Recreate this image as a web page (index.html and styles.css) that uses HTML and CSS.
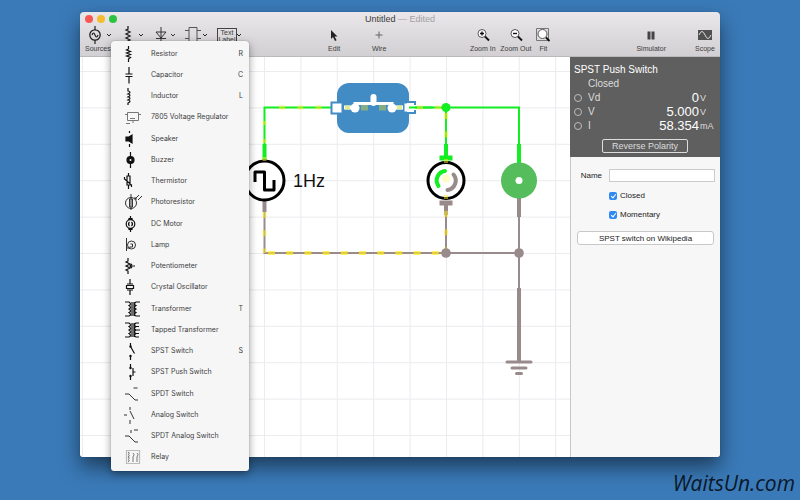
FILE: index.html
```
<!DOCTYPE html>
<html lang="en">
	<head>
		<meta charset="utf-8" />
		<title>Untitled</title>

		<meta name="viewport" content="width=device-width, initial-scale=1" />

		<link rel="stylesheet" href="styles.css">
	</head>
	<body>
		<main class="window">
			<header class="titlebar">
				<div class="lights"><i class="close"></i><i class="minimise"></i><i class="expand"></i></div>
				<h1>Untitled <span>— Edited</span></h1>
			</header>

			<nav class="toolbar">
				<div class="parts">
					<button class="tool part">
						<svg width="30" height="18" viewBox="0 0 30 18"><g fill="none" stroke="#222"><circle cx="11" cy="9" r="5.2" stroke-width="1.3" /><path d="M11 0v4M11 14v4M8 9q1.500-4 3 0t3 0" stroke-width="1.200" /><path d="M23 8l2 2 2-2" /></g></svg>
						Sources
					</button>
					<button class="tool part" aria-label="Passives">
						<svg width="30" height="18" viewBox="0 0 30 18"><g fill="none" stroke="#222"><path d="M11 0v3l-2 1 4 2-4 2 4 2-4 2 4 2-2 1v3" stroke-width="1.300" /><path d="M22 8l2 2 2-2" /></g></svg>
					</button>
					<button class="tool part" aria-label="Semiconductors">
						<svg width="30" height="18" viewBox="0 0 30 18"><g fill="none" stroke="#333"><path d="M11 1v16M6 6h10l-5 6zM6 12.500h10" /><path d="M21 8l2 2 2-2" /></g></svg>
					</button>
					<button class="tool part" aria-label="Chips">
						<svg width="30" height="18" viewBox="0 0 30 18"><g fill="none" stroke="#555"><path d="M6 1.500h8v15H6zM2 4.500h4M2 12.500h4M14 4.500h4M14 12.500h4" /><path d="M20 8l2 2 2-2" stroke="#222" /></g></svg>
					</button>
					<button class="tool part" aria-label="Labels">
						<span class="text-label">Text<br>Label</span>
						<svg width="6" height="18" viewBox="0 0 6 18"><path d="M1 8l2 2 2-2" fill="none" stroke="#222" /></svg>
					</button>
				</div>

				<div class="tools modes">
					<button class="tool">
						<svg width="16" height="18" viewBox="0 0 16 18"><path d="M5 4v9l2-2 2 4 1.600-.8-2-3.700h2.900z" fill="#222" /></svg>
						Edit
					</button>
					<button class="tool">
						<svg width="16" height="18" viewBox="0 0 16 18"><path d="M8 5.500v7M4.500 9h7" stroke="#666" /></svg>
						Wire
					</button>
				</div>

				<div class="tools zooms">
					<button class="tool">
						<svg width="16" height="18" viewBox="0 0 16 18"><circle cx="7" cy="7.500" r="4" fill="#fff" stroke="#555" /><path d="M5 7.500h4M7 5.500v4" stroke="#111" stroke-width="1.400" /><path d="M10 10.500l4 4" stroke="#111" stroke-width="1.800" /></svg>
						Zoom In
					</button>
					<button class="tool">
						<svg width="16" height="18" viewBox="0 0 16 18"><circle cx="7" cy="7.500" r="4" fill="#fff" stroke="#555" /><path d="M5 7.500h4" stroke="#111" stroke-width="1.400" /><path d="M10 10.500l4 4" stroke="#111" stroke-width="1.800" /></svg>
						Zoom Out
					</button>
					<button class="tool fit">
						<svg width="16" height="18" viewBox="0 0 16 18"><path d="M1.500 2.500h12v12h-12z" fill="#ddd" stroke="#777" /><circle cx="7.500" cy="8" r="4.500" fill="#fff" stroke="#555" /><path d="M11 11.500l3.500 3.500" stroke="#111" stroke-width="1.800" /></svg>
						Fit
					</button>
				</div>

				<div class="tools">
					<button class="tool">
						<svg width="16" height="18" viewBox="0 0 16 18"><path d="M4.500 5.500h3v8h-3zM8.500 5.500h3v8h-3z" fill="#444" /></svg>
						Simulator
					</button>
					<button class="tool">
						<svg width="16" height="18" viewBox="0 0 16 18"><path d="M1 4h14v10H1z" fill="#505050" /><path d="M2 9q3-7 6 0t6 0" fill="none" stroke="#ddd" /></svg>
						Scope
					</button>
				</div>
			</nav>

			<div class="document">
				<section class="canvas">
					<svg width="100%" height="400">
						<defs>
							<pattern id="grid" x="2" y="14" width="36.400" height="36.400" patternUnits="userSpaceOnUse">
								<path d="M.5 0v36.400M0 .5h36.400" fill="none" stroke="#ebebf0" />
							</pattern>
						</defs>
						<rect width="100%" height="100%" fill="url(#grid)" />
						<g transform="translate(-80 -57)" fill="none">
							<!-- live wires -->
							<g stroke="#12ee22" stroke-width="2">
								<path d="M264.500 160v-52.500H332M410 107.500h109V160M446 107.500V160" />
								<path d="M264.500 144v17M446 144v13M519 144v20" stroke-width="4" />
								<path d="M439.500 158h13" stroke-width="5" />
							</g>

							<!-- ground wires -->
							<g stroke="#998b8b" stroke-width="2">
								<path d="M264.500 200v53H519M446 205v48M519 195v95" />
								<path d="M264.500 200v12M446 204v11M519 196v21M519 288v74" stroke-width="4" />
								<path d="M439.500 203h13" stroke-width="5" />
								<path d="M507 362h24M512 368h14M516.500 373.500h5" stroke-width="3" stroke-linecap="round" />
							</g>

							<!-- push switch -->
							<rect x="337" y="83" width="72" height="50" rx="12" fill="#428cc6" />
							<path d="M331.500 102.500h11v11h-11z" fill="#fff" stroke="#428cc6" stroke-width="2" />
							<path d="M415 105v-3h-9v11h9v-3" fill="#fff" stroke="#428cc6" stroke-width="2" />
							<path d="M414 104.500h-8.500v6h8.500" fill="#fff" stroke="#fff" stroke-width="2" />
							<path d="M409 107.500h24" stroke="#12ee22" stroke-width="2" />
							<path d="M344 107.500h14M390 107.500h13" stroke="#fff" stroke-width="4" />
							<path d="M345 107.500h5M397 107.500h5" stroke="#e4ec92" stroke-width="4" />
							<path d="M361 107.500h7M379 107.500h7" stroke="#82ad86" stroke-width="6" />
							<path d="M355 106v-2.500h37v2.500" stroke="#fff" stroke-width="3" />
							<path d="M373.500 103v-6" stroke="#fff" stroke-width="6" stroke-linecap="round" />
							<circle cx="355" cy="108" r="4.500" fill="#fff" />
							<circle cx="392" cy="108" r="4.500" fill="#fff" />

							<!-- square wave source -->
							<circle cx="264.500" cy="180.500" r="19.500" fill="#fff" stroke="#000" stroke-width="3" />
							<path d="M255 182v-10h9.500v18h9.500v-10" stroke="#000" stroke-width="3" stroke-linejoin="round" />
							<text x="293" y="187" class="frequency">1Hz</text>

							<!-- motor -->
							<circle cx="446" cy="180.500" r="18" fill="#fff" stroke="#000" stroke-width="3" />
							<path d="M445 171a9.500 9.500 0 0 0-6.500 15" stroke="#12ee22" stroke-width="4" stroke-linecap="round" />
							<path d="M453.500 174.500a9.500 9.500 0 0 1-6 15.500" stroke="#998b8b" stroke-width="4" stroke-linecap="round" />

							<!-- buzzer -->
							<circle cx="519" cy="180.500" r="18" fill="#55bd5b" />
							<circle cx="519" cy="180.500" r="3.500" fill="#fff" />

							<!-- current flow -->
							<g stroke="#ffec20" stroke-opacity=".5" stroke-width="4">
								<path d="M264.500 161v-53.500" stroke-dasharray="4 14" />
								<path d="M279 107.500h52" stroke-dasharray="6 12.200" />
								<path d="M264.500 212v41" stroke-dasharray="6 12.200" />
								<path d="M268 253h178" stroke-dasharray="7 11.200" stroke-opacity=".7" />
								<path d="M417 107.500h26" stroke-dasharray="6 12.200" />
								<path d="M446 113v30M446 211v39" stroke-dasharray="6 12.200" />
								<path d="M446 159v4M446 195v4" />
							</g>
							<circle cx="446" cy="178.500" r="4" fill="#fffbc4" />

							<circle cx="446" cy="107.500" r="4.500" fill="#12ee22" />
							<circle cx="446" cy="253" r="4.800" fill="#998b8b" />
							<circle cx="519" cy="253" r="4.800" fill="#998b8b" />
						</g>
					</svg>
				</section>

				<aside class="inspector">
					<section class="readings">
						<h2>SPST Push Switch</h2>
						<p>Closed</p>
						<label class="reading"><input type="radio" name="trace">Vd <output><b>0</b>V</output></label>
						<label class="reading"><input type="radio" name="trace">V <output><b>5.000</b>V</output></label>
						<label class="reading"><input type="radio" name="trace">I <output><b>58.354</b>mA</output></label>
						<button class="reverse">Reverse Polarity</button>
					</section>
					<form class="properties">
						<label for="name">Name</label>
						<input type="text" id="name">
						<label class="check"><input type="checkbox" checked>Closed</label>
						<label class="check"><input type="checkbox" checked>Momentary</label>
						<button type="button" class="wikipedia">SPST switch on Wikipedia</button>
					</form>
				</aside>
			</div>

			<ul class="menu">
				<li><button><svg width="40" height="20" viewBox="0 -10 40 20"><path d="M17.500-8v3l-2 1 4 1.500-4 1.500 4 1.500-4 1.500 4 1.500-2 1.500v3" /></svg>Resistor <kbd>R</kbd></button></li>
				<li><button><svg width="40" height="20" viewBox="0 -10 40 20"><path d="M18-8v7M18 1.500v7M14.500-1h7M14.500 1.500h7" /></svg>Capacitor <kbd>C</kbd></button></li>
				<li><button><svg width="40" height="20" viewBox="0 -10 40 20"><path d="M17-8v3q4 1 0 3q4 1 0 3q4 1 0 3q4 1 0 3v2M17-2h-1M17 1h-1M17 4h-1" /></svg>Inductor <kbd>L</kbd></button></li>
				<li><button><svg width="40" height="20" viewBox="0 -10 40 20"><path class="soft" d="M16.500-4.500h11v8h-11zM14-2.500h2.500M27.500-2.500h2.500M22 3.500v2.500M19 1.500h5M15 6.500h4" /></svg>7805 Voltage Regulator</button></li>
				<li><button><svg width="40" height="20" viewBox="0 -10 40 20"><path d="M18.500-8v2M18.500 5v3" /><path class="solid" d="M15-2h3l3-2v8l-3-2h-3z" /></svg>Speaker</button></li>
				<li><button><svg width="40" height="20" viewBox="0 -10 40 20"><path d="M19.500-8v16" /><circle class="solid" cx="19.500" r="3.500" /><circle cx="19.500" r="1" fill="#fff" stroke="none" /></svg>Buzzer</button></li>
				<li><button><svg width="40" height="20" viewBox="0 -10 40 20"><path d="M17.500-8v3h-1.500v9h3v-9h-1.500M17.500 4v4M13.500-4v2l7 6v2" /></svg>Thermistor</button></li>
				<li><button><svg width="40" height="20" viewBox="0 -10 40 20"><g class="thin"><circle cx="20" cy="1" r="5.500" /><path d="M20-8v16M18.500-3h3v8h-3zM24-3l4-4M27-2l4-4M24-5v2h2" /></g></svg>Photoresistor</button></li>
				<li><button><svg width="40" height="20" viewBox="0 -10 40 20"><circle cx="19.500" r="4.300" /><path d="M19.500-8v3M19.500 5v3M18.500-2q-2 2 0 4M20.500-2q2 2 0 4" /><path class="solid" d="M18-4.500h3v-1h-3zM18 5.500h3v-1h-3z" /></svg>DC Motor</button></li>
				<li><button><svg width="40" height="20" viewBox="0 -10 40 20"><g class="thin"><path d="M15.500-7v13M15.500 3h4M19.500-1h2v3h-3" /><circle cx="20.500" r="4" /></g></svg>Lamp</button></li>
				<li><button><svg width="40" height="20" viewBox="0 -10 40 20"><path d="M17-8v3l-2 1 4 2-4 2 4 2-4 2 2 1v3M19 0h5M21-2l-2 2 2 2" /></svg>Potentiometer</button></li>
				<li><button><svg width="40" height="20" viewBox="0 -10 40 20"><path d="M19-8v5M19 3v5M16-3h6M16 3h6M15.500-1.500h7v3h-7z" /></svg>Crystal Oscillator</button></li>
				<li><button><svg width="40" height="20" viewBox="0 -10 40 20"><path d="M14-7h4q3 2 0 3.500q3 2 0 3.500q3 2 0 3.500q3 2 0 3.500h-4M29-7h-4q-3 2 0 3.500q-3 2 0 3.500q-3 2 0 3.500q-3 2 0 3.500h4M21-7v14M23-7v14" /></svg>Transformer <kbd>T</kbd></button></li>
				<li><button><svg width="40" height="20" viewBox="0 -10 40 20"><path d="M14-7h4q3 2 0 3.500q3 2 0 3.500q3 2 0 3.500q3 2 0 3.500h-4M28-7h-3q-3 2 0 3.500q-3 2 0 3.500q-3 2 0 3.500q-3 2 0 3.500h3M21-7v14M23-7v14M25-3.500h3M25 0h4M25 3.500h3" /></svg>Tapped Transformer</button></li>
				<li><button><svg width="40" height="20" viewBox="0 -10 40 20"><path d="M19.500-8v3M19.500-4.500l4 7M19.500 5v4" /><circle class="solid" cx="19.500" cy="-4.500" r=".6" /><circle class="solid" cx="19.500" cy="5" r=".6" /></svg>SPST Switch <kbd>S</kbd></button></li>
				<li><button><svg width="40" height="20" viewBox="0 -10 40 20"><path d="M19.500-8v4M19.500 4v4M22-4v8M22 0h2.500" /><circle class="solid" cx="19.500" cy="-4" r=".6" /><circle class="solid" cx="19.500" cy="4" r=".6" /></svg>SPST Push Switch</button></li>
				<li><button><svg width="40" height="20" viewBox="0 -10 40 20"><path class="thin" d="M14 0h4l6 6h3M22.500-6h4" /></svg>SPDT Switch</button></li>
				<li><button><svg width="40" height="20" viewBox="0 -10 40 20"><path d="M13 0h3M19-8v3M19-4l4 8M19 5v4" class="thin" /></svg>Analog Switch</button></li>
				<li><button><svg width="40" height="20" viewBox="0 -10 40 20"><path class="thin" d="M14 0h4l6 6h3M23-6h4M20-6v3" /></svg>SPDT Analog Switch</button></li>
				<li><button><svg width="40" height="20" viewBox="0 -10 40 20"><path class="frame" d="M15.500-6.500h13v13h-13z" /><path class="soft" d="M17-5q3 1 0 2.500q3 1 0 2.500q3 1 0 2.500q3 1 0 2.500M22-4q2 1 0 4v5M26-4q2 1 0 4v5" /></svg>Relay</button></li>
			</ul>
		</main>

		<p class="watermark">WaitsUn.com</p>
	</body>
</html>
```

FILE: styles.css
```
* { box-sizing: border-box; }

body {
	margin: 0;
	min-height: 100vh;
	padding: 12px 10% 43px;
	display: flex;
	position: relative;
	background: #3a7ab8;
	color: #3c3c3e;
	font: 7px/10px "Liberation Sans", Arial, sans-serif;
}

button,
input {
	margin: 0;
	padding: 0;
	border: 0;
	background: none;
	color: inherit;
	font: inherit;
}

svg { flex: none; }

h1, h2, p { margin: 0; font-weight: normal; }

.window {
	flex: 1;
	display: flex;
	flex-direction: column;
	position: relative;
	border-radius: 4px;
	background: linear-gradient(#e9e7e9, #d1cfd1 45px);
	box-shadow: 0 10px 20px rgba(0, 0, 0, 0.5), 0 0 1px rgba(0, 0, 0, 0.4);
}

.titlebar {
	display: grid;
	grid-template-columns: 50px 1fr 50px;
	align-items: center;
	height: 14px;
}

.titlebar h1 {
	font-size: 9px;
	text-align: center;
}

.titlebar h1 span { color: #a3a1a4; }

.lights {
	display: flex;
	gap: 4px;
	padding-left: 5px;
}

.lights i {
	width: 8px;
	height: 8px;
	border-radius: 50%;
}

.close { background: #f95852; }
.minimise { background: #f6bd30; }
.expand { background: #2bc33f; }

.toolbar {
	display: flex;
	height: 31px;
	padding: 0 4px;
	border-bottom: 1px solid #bbb9bb;
}

.tools {
	display: flex;
	margin-left: auto;
}

.modes { gap: 15px; }
.zooms { margin-right: 10px; }

.parts {
	display: flex;
	flex: none;
	width: 163px;
}

.tool {
	display: flex;
	flex-direction: column;
	align-items: center;
	min-width: 30px;
	white-space: nowrap;
}

.zooms .tool { min-width: 33px; }
.zooms .fit { min-width: 22px; }
.tools:last-child .tool { min-width: 22px; }
.tools:last-child { gap: 28px; }

.part {
	flex: none;
	align-items: flex-start;
	width: 33px;
	padding-left: 1px;
}

.part svg { margin-left: -1px; }

.part:last-child {
	flex-direction: row;
	width: 30px;
}

.text-label {
	width: 20px;
	height: 17px;
	margin-top: 2px;
	border: 1px solid #444;
	font-size: 7px;
	line-height: 7px;
}

.document {
	flex: 1;
	display: flex;
}

.canvas {
	flex: 1;
	min-width: 0;
	background: #fff;
	border-radius: 0 0 0 3px;
}

.canvas svg { display: block; }

.frequency {
	fill: #111;
	font-size: 18px;
}

.inspector {
	width: 150px;
	border-left: 1px solid #c8c8c8;
	background: #f7f7f7;
	border-radius: 0 0 3px 0;
}

.readings {
	display: flex;
	flex-direction: column;
	height: 100px;
	margin-left: -1px;
	padding: 6px 4px;
	background: #5f5f5f;
	color: #ddd;
	font-size: 10px;
	line-height: 14px;
}

.readings h2 {
	color: #fff;
	font-size: 10px;
}

.readings p { padding-left: 14px; }

.reading {
	display: flex;
	align-items: center;
	height: 14px;
}

.reading input {
	appearance: none;
	width: 8px;
	height: 8px;
	margin-right: 6px;
	border: 1px solid #bbb;
	border-radius: 50%;
}

.reading output {
	display: grid;
	grid-template-columns: 1fr 16px;
	flex: 1;
	gap: 1px;
	text-align: left;
	font-size: 9px;
}

.reading b {
	color: #fff;
	font-size: 13px;
	font-weight: normal;
	text-align: right;
}

.reverse {
	align-self: center;
	width: 86px;
	height: 14px;
	margin-top: 6px;
	flex: none;
	border: 1px solid #ddd;
	border-radius: 2px;
	font-size: 9px;
	line-height: 12px;
}

.properties {
	display: grid;
	grid-template-columns: 26px 1fr;
	column-gap: 7px;
	row-gap: 8px;
	padding: 12px 5px;
	align-items: center;
	color: #222;
	font-size: 8px;
	line-height: 11px;
}

.properties > label:first-child { text-align: right; }

.properties input[type="text"] {
	width: 100%;
	height: 13px;
	border: 1px solid #ccc;
	background: #fff;
}

.check {
	grid-column: 2;
	display: flex;
	align-items: center;
	gap: 3px;
}

.check input {
	appearance: none;
	width: 8px;
	height: 8px;
	border-radius: 2px;
	background: #2f8bf3;
}

.check input:checked::before {
	content: "";
	display: block;
	width: 2px;
	height: 4px;
	margin: 1px 0 0 3px;
	border: solid #fff;
	border-width: 0 1px 1px 0;
	box-sizing: content-box;
	transform: rotate(40deg);
}

.wikipedia {
	grid-column: 1 / -1;
	height: 14px;
	margin: 3px 1px 0;
	border: 1px solid #c8c8c8;
	border-radius: 3px;
	background: #fff;
}

.menu {
	position: absolute;
	top: 29px;
	left: 31px;
	width: 138px;
	height: 430px;
	margin: 0;
	padding: 2px 0 3px;
	display: grid;
	grid-auto-rows: 1fr;
	list-style: none;
	border-radius: 3px;
	background: #f6f6f6;
	box-shadow: 0 3px 8px rgba(0, 0, 0, 0.4), 0 0 1px rgba(0, 0, 0, 0.5);
	font-family: Inter, "Liberation Sans", sans-serif;
}

.menu li { display: flex; }

.menu button {
	flex: 1;
	display: flex;
	align-items: center;
	padding-right: 6px;
	text-align: left;
}

.menu kbd {
	margin-left: auto;
	font: inherit;
}

.menu svg {
	fill: none;
	stroke: #111;
	stroke-width: 1.2;
}

.menu .solid { fill: #111; }
.menu .thin { stroke: #333; stroke-width: 1; }
.menu .soft { stroke: #777; stroke-width: 1; }
.menu .frame { stroke: #bbb; }

.watermark {
	position: absolute;
	right: 5px;
	bottom: 3px;
	color: #0b1828;
	font: italic 21px/28px "Open Sans", sans-serif;
}
```
